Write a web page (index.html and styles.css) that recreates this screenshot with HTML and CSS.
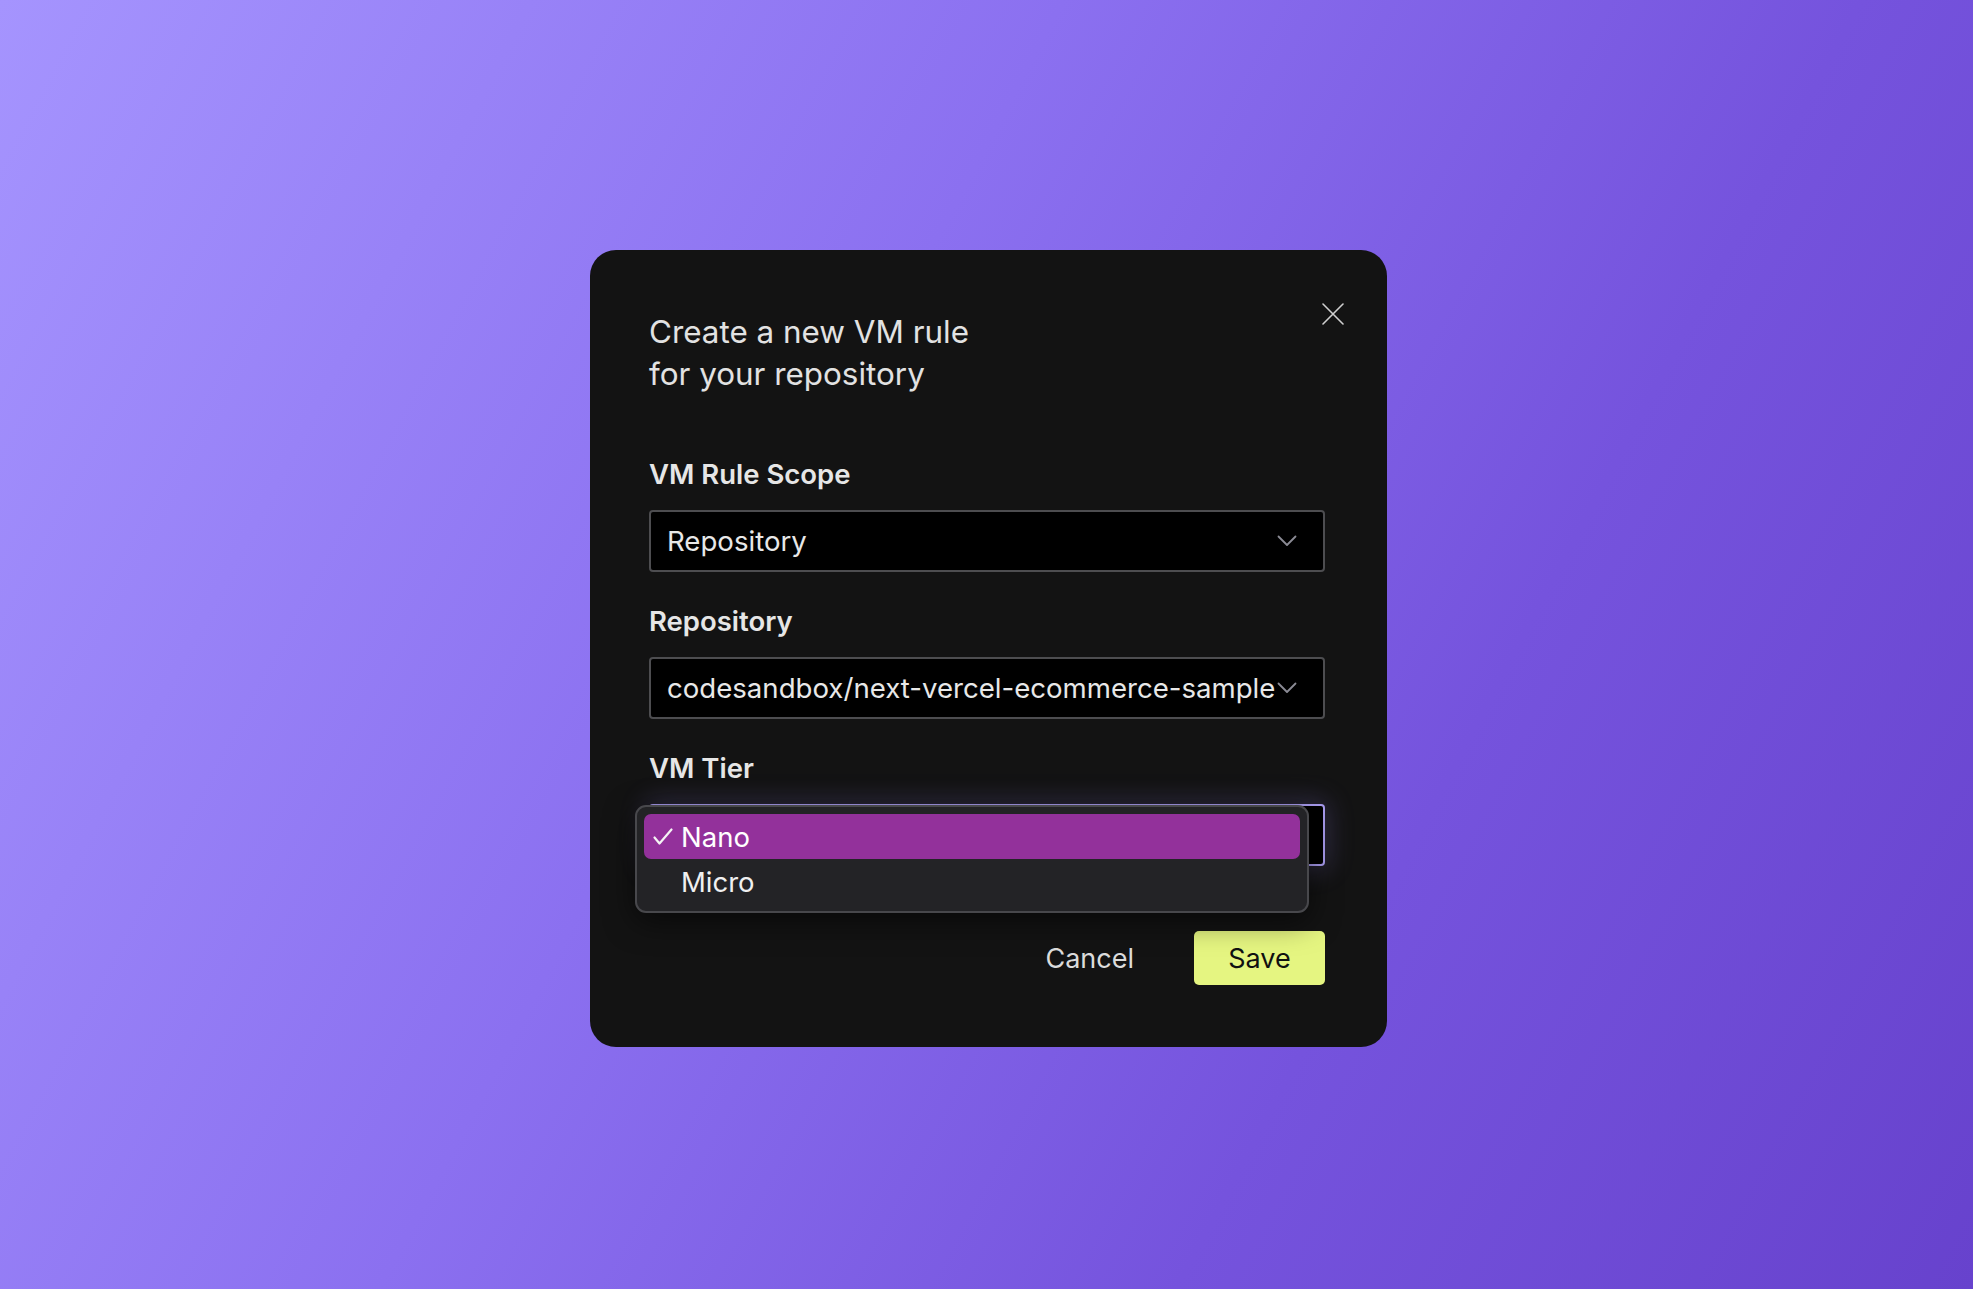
FILE: index.html
```html
<!DOCTYPE html>
<html lang="en">
<head>
<meta charset="utf-8">
<title>Create a new VM rule</title>
<link rel="stylesheet" href="styles.css">
</head>
<body>
<main class="stage">
  <section class="modal" role="dialog" aria-labelledby="modal-title">
    <header class="modal-header">
      <h1 id="modal-title" class="modal-title">Create a new VM rule<br>for your repository</h1>
      <button class="close-btn" type="button" aria-label="Close">
        <svg viewBox="0 0 22 22" width="22" height="22"><path d="M1 1 L21 21 M21 1 L1 21" stroke="#cfcfcf" stroke-width="1.6" stroke-linecap="round" fill="none"/></svg>
      </button>
    </header>

    <div class="fields">
      <div class="field">
        <label class="field-label">VM Rule Scope</label>
        <div class="select">
          <span class="select-value">Repository</span>
          <svg class="chevron" viewBox="0 0 20 12" width="20" height="12"><path d="M1.5 1.5 L10 10 L18.5 1.5" stroke="#8b8b95" stroke-width="1.8" fill="none" stroke-linecap="round" stroke-linejoin="round"/></svg>
        </div>
      </div>

      <div class="field">
        <label class="field-label">Repository</label>
        <div class="select">
          <span class="select-value">codesandbox/next-vercel-ecommerce-sample</span>
          <svg class="chevron" viewBox="0 0 20 12" width="20" height="12"><path d="M1.5 1.5 L10 10 L18.5 1.5" stroke="#8b8b95" stroke-width="1.8" fill="none" stroke-linecap="round" stroke-linejoin="round"/></svg>
        </div>
      </div>

      <div class="field field-open">
        <label class="field-label">VM Tier</label>
        <div class="select select-focused"></div>
        <ul class="dropdown" role="listbox">
          <li class="option option-selected" role="option">
            <svg class="check" viewBox="0 0 20 17" width="20" height="17"><path d="M1.5 9.5 L6.5 15.5 L18.5 1.5" stroke="#f4f4f4" stroke-width="2.2" fill="none" stroke-linecap="round" stroke-linejoin="round"/></svg>
            <span>Nano</span>
          </li>
          <li class="option" role="option"><span class="check-space"></span><span>Micro</span></li>
        </ul>
      </div>
    </div>

    <footer class="actions">
      <button class="btn btn-cancel" type="button">Cancel</button>
      <button class="btn btn-save" type="button">Save</button>
    </footer>
  </section>
</main>
</body>
</html>
```

FILE: styles.css
```css
* { box-sizing: border-box; }

html, body {
  margin: 0;
  padding: 0;
  height: 100%;
}

body {
  font-family: "Inter", "Noto Sans", "Liberation Sans", sans-serif;
  background: linear-gradient(118deg, #a594fe 0%, #8b70f0 40%, #7553dd 70%, #6742cd 100%);
  overflow: hidden;
}

.stage {
  height: 100%;
  display: flex;
  align-items: center;
  justify-content: center;
  padding: 8px 0 0 4px;
}

.modal {
  width: 797px;
  height: 797px;
  background: #131313;
  border-radius: 26px;
  padding: 61px 62px 62px 59px;
  display: flex;
  flex-direction: column;
}

.modal-header {
  display: flex;
  justify-content: space-between;
  align-items: flex-start;
}

.modal-title {
  margin: 0;
  font-size: 31.4px;
  font-weight: 400;
  line-height: 42px;
  color: #e2e2e2;
}

.close-btn {
  margin: -8px -19px 0 0;
  padding: 0;
  width: 22px;
  height: 22px;
  background: none;
  border: 0;
  display: flex;
}

.fields {
  margin-top: 63px;
  display: flex;
  flex-direction: column;
  gap: 33px;
}

.field {
  display: flex;
  flex-direction: column;
  gap: 20px;
}

.field-open { position: relative; }

.field-label {
  font-size: 27.5px;
  font-weight: 600;
  line-height: 32px;
  color: #e6e6e6;
}

.select {
  height: 62px;
  background: #000;
  border: 2px solid #4d4d50;
  border-radius: 4px;
  display: flex;
  align-items: center;
  padding: 0 26px 0 16px;
}

.select-value {
  flex: 1;
  font-size: 27.6px;
  color: #e8e8e8;
  white-space: nowrap;
}

.chevron { flex: none; }

.select-focused {
  border-color: #a99cf0;
  box-shadow: 0 0 26px 4px rgba(150, 130, 240, 0.22);
}

.dropdown {
  position: absolute;
  left: -14px;
  top: 53px;
  width: 674px;
  margin: 0;
  padding: 7px;
  list-style: none;
  background: #232326;
  border: 2px solid #48484c;
  border-radius: 11px;
  box-shadow: 0 8px 30px rgba(0, 0, 0, 0.55);
}

.option {
  height: 45px;
  display: flex;
  align-items: center;
  border-radius: 7px;
  font-size: 27.5px;
  color: #f0f0f0;
  padding-left: 9px;
}

.option-selected {
  background: #93319b;
  color: #fff;
}

.check {
  flex: none;
  margin-right: 8px;
}

.check-space {
  flex: none;
  width: 28px;
}

.actions {
  margin-top: auto;
  display: flex;
  justify-content: flex-end;
  align-items: center;
  gap: 60px;
}

.btn {
  font-family: inherit;
  font-size: 27px;
  border: 0;
  cursor: pointer;
}

.btn-cancel {
  background: none;
  color: #dcdcdc;
  padding: 0 12px;
  margin-right: -12px;
}

.btn-save {
  width: 131px;
  height: 54px;
  background: #e5f581;
  color: #111;
  border-radius: 5px;
}
```
